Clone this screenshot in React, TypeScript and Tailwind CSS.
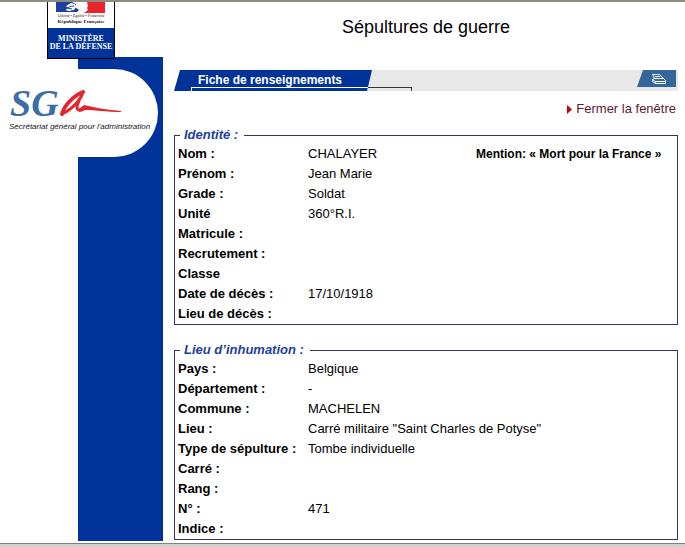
import type { ReactNode } from "react";

type Row = { label: string; value: string; mention?: string };

const IDENTITE: Row[] = [
  { label: "Nom :", value: "CHALAYER", mention: "Mention: « Mort pour la France »" },
  { label: "Prénom :", value: "Jean Marie" },
  { label: "Grade :", value: "Soldat" },
  { label: "Unité", value: "360°R.I." },
  { label: "Matricule :", value: "" },
  { label: "Recrutement :", value: "" },
  { label: "Classe", value: "" },
  { label: "Date de décès :", value: "17/10/1918" },
  { label: "Lieu de décès :", value: "" },
];

const INHUMATION: Row[] = [
  { label: "Pays :", value: "Belgique" },
  { label: "Département :", value: "-" },
  { label: "Commune :", value: "MACHELEN" },
  { label: "Lieu :", value: 'Carré militaire "Saint Charles de Potyse"' },
  { label: "Type de sépulture :", value: "Tombe individuelle" },
  { label: "Carré :", value: "" },
  { label: "Rang :", value: "" },
  { label: "N° :", value: "471" },
  { label: "Indice :", value: "" },
];

function MinistryBadge() {
  return (
    <svg width="68" height="57" viewBox="0 0 68 57" className="relative z-10 ml-[47px] block" role="img" aria-label="Ministère de la Défense">
      <rect width="68" height="57" fill="#000" />
      <rect x="1" width="66" height="27" fill="#fff" />
      <rect x="1" y="26" width="66" height="30" fill="#003399" />
      <path d="M9 0h16l4 2-1 3 4 3-2 2H9z" fill="#1c3fa0" />
      <path d="M19 4l5-3 4 1 1 3-2 3-5 1-4-1 3-2z" fill="#fff" />
      <path d="M11 9c3-3 5 0 8-2s4-3 8-3M20 6l5 1" stroke="#1c3fa0" fill="none" />
      <path d="M40 0h18v11H37l4-3-1-2 1-2z" fill="#e8242c" />
      <text x="34" y="15" fontSize="4" textAnchor="middle" fontFamily="Liberation Serif, serif" fontStyle="italic" fill="#111">Liberté • Égalité • Fraternité</text>
      <text x="34" y="21" fontSize="5" fontWeight="bold" textAnchor="middle" fontFamily="Liberation Serif, serif" fill="#111">République Française</text>
      <g fill="#fff" fontFamily="Liberation Serif, serif" fontWeight="bold" fontSize="8" textAnchor="middle">
        <text x="34" y="39">MINISTÈRE</text>
        <text x="34" y="47">DE LA DÉFENSE</text>
      </g>
    </svg>
  );
}

function SgaLogo() {
  return (
    <svg width="158" height="88" viewBox="0 0 158 88" className="block" role="img" aria-label="Secrétariat général pour l'administration">
      <text x="10" y="47" fontSize="38" fontStyle="italic" fontWeight="bold" fontFamily="Liberation Serif, serif" fill="#3a6ea5">SG</text>
      <g fill="none" stroke="#e3262e" strokeLinecap="round" strokeLinejoin="round">
        <path d="M62 45C64 37 73 27 83 23" strokeWidth="4" />
        <path d="M83 23C81 30 73 40 62 45" strokeWidth="3" />
        <path d="M79 32C76 38 76 43 82 40" strokeWidth="3" />
      </g>
      <path d="M79 40l5-4c12 3 24 5 37 6v1c-14 0-25-2-36-2-2 1-4 2-6 2z" fill="#e3262e" />
      <text x="9" y="60" fontSize="8" fontStyle="italic" fontFamily="Liberation Sans, sans-serif" fill="#111">Secrétariat général pour l'administration</text>
    </svg>
  );
}

function PrinterIcon() {
  return (
    <svg width="16" height="12" viewBox="0 0 16 12" fill="none" stroke="#fff" aria-hidden="true">
      <path d="M3.500 5.500l-2-4h7l4 4M4 3.500h5M1.500 6.500l2-1h9l2 2v3h-10l-3-2zM1.500 6.500l3 2h10M4.500 8.500v2" />
    </svg>
  );
}

function Panel({ title, children }: { title: string; children: ReactNode }) {
  return (
    <fieldset className="min-w-0 border border-[#333366] px-[3px]">
      <legend className="ml-0.5 pr-1.5 pl-1 text-[13px] leading-[18px] font-bold text-[#1f3f9f] italic">{title}</legend>
      {children}
    </fieldset>
  );
}

function Rows({ rows }: { rows: Row[] }) {
  return (
    <table className="w-full table-fixed text-left text-[13px] leading-5">
      <tbody>
        {rows.map((r) => (
          <tr key={r.label} className="h-5">
            <th scope="row" className="w-[130px] p-0 font-bold whitespace-nowrap">{r.label}</th>
            <td className="p-0 whitespace-nowrap">{r.value}</td>
            <td className="w-[198px] p-0 text-[12px] font-bold whitespace-nowrap">{r.mention}</td>
          </tr>
        ))}
      </tbody>
    </table>
  );
}

export default function App() {
  return (
    <div className="flex min-h-screen flex-col border-t-2 border-[#8c8c80] bg-white font-['Liberation_Sans',Arial,sans-serif] text-black">
      <div className="flex grow">
        <aside className="flex w-[163px] shrink-0 flex-col">
          <MinistryBadge />
          <div className="-mt-0.5 mb-0.5 ml-[78px] grow bg-[#003399] pt-3">
            <div className="-ml-[78px] w-[158px] rounded-r-full bg-white">
              <SgaLogo />
            </div>
          </div>
        </aside>

        <main className="min-w-0 grow pr-[7px] pb-0.5 pl-[11px]">
          <h1 className="mb-[18px] text-center text-[18px] leading-[50px]">Sépultures de guerre</h1>

          <div className="relative flex h-[21px] justify-between bg-[linear-gradient(90deg,#fff_20px,#e8e8e8_20px)]">
            <h2 className="w-[198px] bg-[#003399] pl-6 text-[12px] leading-[21px] font-bold text-white [clip-path:polygon(6px_0,100%_0,calc(100%-5px)_100%,0_100%)]">
              Fiche de renseignements
            </h2>
            <div className="absolute bottom-0 left-[17px] h-1 w-[177px] border-t border-l border-white" />
            <div className="absolute bottom-0 left-[194px] h-1 w-[44px] border-t border-r border-[#333]" />
            <button
              type="button"
              aria-label="Imprimer"
              className="mr-0.5 flex h-[17px] w-[39px] items-center justify-center bg-[#336699] pl-1 [clip-path:polygon(6px_0,100%_0,100%_100%,0_100%)]"
            >
              <PrinterIcon />
            </button>
          </div>

          <div className="mt-2 mb-[7px] flex justify-end pr-0.5">
            <a href="#fermer" className="flex items-center gap-1 text-[13px] leading-5 text-[#5c1a33]">
              <svg width="5" height="9" viewBox="0 0 5 9" aria-hidden="true">
                <path d="M0 0l5 4.500-5 4.500z" fill="#cc0000" />
              </svg>
              Fermer la fenêtre
            </a>
          </div>

          <div className="flex flex-col gap-4">
            <Panel title="Identité :">
              <Rows rows={IDENTITE} />
            </Panel>
            <Panel title="Lieu d’inhumation :">
              <Rows rows={INHUMATION} />
            </Panel>
          </div>
        </main>
      </div>
      <footer className="h-1 border-t border-[#808080] bg-[#d0d0cc]" />
    </div>
  );
}
